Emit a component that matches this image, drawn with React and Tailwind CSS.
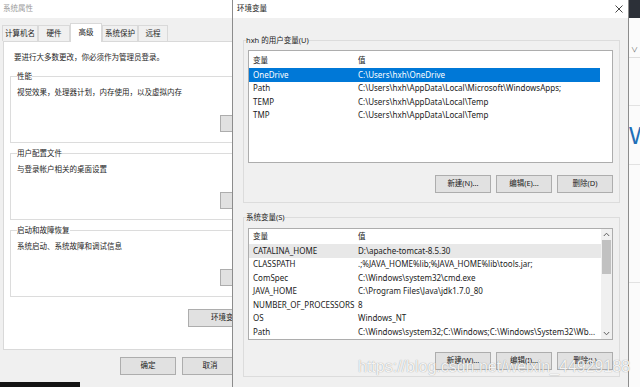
const userVars = [
  ["OneDrive", "C:\\Users\\hxh\\OneDrive"],
  ["Path", "C:\\Users\\hxh\\AppData\\Local\\Microsoft\\WindowsApps;"],
  ["TEMP", "C:\\Users\\hxh\\AppData\\Local\\Temp"],
  ["TMP", "C:\\Users\\hxh\\AppData\\Local\\Temp"],
];

const sysVars = [
  ["CATALINA_HOME", "D:\\apache-tomcat-8.5.30"],
  ["CLASSPATH", ".;%JAVA_HOME%lib;%JAVA_HOME%lib\\tools.jar;"],
  ["ComSpec", "C:\\Windows\\system32\\cmd.exe"],
  ["JAVA_HOME", "C:\\Program Files\\Java\\jdk1.7.0_80"],
  ["NUMBER_OF_PROCESSORS", "8"],
  ["OS", "Windows_NT"],
  ["Path", "C:\\Windows\\system32;C:\\Windows;C:\\Windows\\System32\\Wb..."],
];

function Btn({ children, className = "" }) {
  return (
    <div
      className={`flex h-[18px] shrink-0 items-center justify-center border border-[#adadad] bg-[#e1e1e1] text-[7.5px] text-[#222] ${className}`}
    >
      {children}
    </div>
  );
}

function Group({ label, text }) {
  return (
    <fieldset className="h-[72px] w-[240px] shrink-0 border border-[#dcdcdc] pl-[6px]">
      <legend className="leading-[10px]">{label}</legend>
      <div className="mt-[6px] leading-[10px]">{text}</div>
      <div className="mt-[18px] ml-[203px] h-[17px] w-[40px] border border-[#adadad] bg-[#e1e1e1]" />
    </fieldset>
  );
}

function Tab({ label, active, className }) {
  return (
    <div
      className={`flex shrink-0 items-center justify-center border-x border-t border-[#d9d9d9] ${
        active ? "relative z-10 -mb-px h-[19px] bg-white" : "h-[16px] bg-[#f0f0f0]"
      } ${className}`}
    >
      {label}
    </div>
  );
}

function Chevron({ up }) {
  return (
    <svg width="7" height="5" viewBox="0 0 7 5" className="mx-auto">
      <path
        d={up ? "M0.8 4 L3.5 1.2 L6.2 4" : "M0.8 1 L3.5 3.8 L6.2 1"}
        fill="none"
        stroke="#606060"
        strokeWidth="1"
      />
    </svg>
  );
}

function LeftWindow() {
  return (
    <div className="flex h-full w-[232px] shrink-0 flex-col overflow-hidden bg-[#f0f0f0] text-[7.5px] text-[#1e1e1e]">
      <div className="flex h-[18px] shrink-0 items-center bg-white pl-[3px] text-[#9a9a9a]">系统属性</div>

      <div className="mt-[5px] flex h-[18px] shrink-0 items-end pl-[2px]">
        <Tab label="计算机名" className="w-[36px]" />
        <Tab label="硬件" className="w-[32px]" />
        <Tab label="高级" active className="w-[32px]" />
        <Tab label="系统保护" className="w-[36px]" />
        <Tab label="远程" className="w-[30px]" />
      </div>

      <div className="ml-[3px] flex h-[309px] w-[270px] shrink-0 flex-col border border-[#d9d9d9] bg-white pt-[10px] pl-[6px]">
        <div className="ml-[4px] leading-[10px]">要进行大多数更改，你必须作为管理员登录。</div>
        <div className="mt-[9px] flex flex-col gap-[5px]">
          <Group label="性能" text="视觉效果，处理器计划，内存使用，以及虚拟内存" />
          <Group label="用户配置文件" text="与登录帐户相关的桌面设置" />
          <Group label="启动和故障恢复" text="系统启动、系统故障和调试信息" />
        </div>
        <Btn className="mt-[12px] ml-[178px] w-[100px] !justify-start pl-[22px]">环境变量(N)...</Btn>
      </div>

      <div className="mt-[7px] flex shrink-0 gap-[6px] pl-[120px]">
        <Btn className="h-[17px] w-[56px]">确定</Btn>
        <Btn className="h-[17px] w-[56px]">取消</Btn>
      </div>
      <div className="mt-[7px] h-[6px] w-[80px] shrink-0 bg-[#141414]" />
    </div>
  );
}

function Row({ name, value, className = "" }) {
  return (
    <div className={`flex h-[13.5px] items-center whitespace-nowrap ${className}`}>
      <div className="w-[109px] shrink-0 pl-[4px]">{name}</div>
      <div>{value}</div>
    </div>
  );
}

function Header({ className = "" }) {
  return (
    <div className={`flex items-center text-[7.5px] ${className}`}>
      <div className="w-[109px] shrink-0 pl-[4px]">变量</div>
      <div>值</div>
    </div>
  );
}

function RightWindow() {
  return (
    <div className="flex h-full w-[397px] shrink-0 flex-col border-x border-[#8c8c8c] bg-[#f0f0f0] text-[7.5px] text-[#1b1b1b]">
      <div className="flex h-[18px] shrink-0 items-center justify-between bg-white pl-[4px] pr-[5px]">
        <span>环境变量</span>
        <svg width="8" height="8" viewBox="0 0 8 8">
          <path d="M0.5 0.5 L7.5 7.5 M7.5 0.5 L0.5 7.5" stroke="#333" strokeWidth="0.9" />
        </svg>
      </div>

      <fieldset className="mt-[17px] ml-[10px] h-[168px] w-[377px] shrink-0 border border-[#dcdcdc] pl-[4px]">
        <legend className="-ml-[2px] text-[7.5px] leading-[10px]">hxh 的用户变量(U)</legend>
        <div className="mt-[5px] h-[113px] w-[365px] overflow-hidden border border-[#adadad] bg-white pt-[2px] text-[8px]">
          <Header className="h-[15px]" />
          {userVars.map(([n, v], i) => (
            <Row
              key={n + i}
              name={n}
              value={v}
              className={i === 0 ? "w-[351px] bg-[#0078d7] text-white" : "w-[351px]"}
            />
          ))}
        </div>
        <div className="mt-[12px] flex w-[365px] justify-end gap-[5px]">
          <Btn className="w-[56px]">新建(N)...</Btn>
          <Btn className="w-[56px]">编辑(E)...</Btn>
          <Btn className="w-[56px]">删除(D)</Btn>
        </div>
      </fieldset>

      <fieldset className="mt-[9px] ml-[10px] h-[165px] w-[377px] shrink-0 border border-[#dcdcdc] pl-[4px]">
        <legend className="-ml-[2px] text-[7.5px] leading-[10px]">系统变量(S)</legend>
        <div className="mt-[6px] flex h-[112px] w-[365px] overflow-hidden border border-[#adadad] bg-white text-[8px]">
          <div className="flex-1 pt-[1px]">
            <Header className="h-[14px]" />
            {sysVars.map(([n, v], i) => (
              <Row key={n + i} name={n} value={v} className={i === 0 ? "bg-[#e8e8e8]" : ""} />
            ))}
          </div>
          <div className="flex w-[11px] shrink-0 flex-col bg-[#f0f0f0]">
            <div className="flex h-[11px] items-center">
              <Chevron up />
            </div>
            <div className="mx-[1px] h-[34px] bg-[#c1c1c1]" />
            <div className="flex-1" />
            <div className="flex h-[11px] items-center">
              <Chevron />
            </div>
          </div>
        </div>
        <div className="mt-[12px] flex w-[365px] justify-end gap-[5px]">
          <Btn className="w-[56px]">新建(W)...</Btn>
          <Btn className="w-[56px]">编辑(I)...</Btn>
          <Btn className="w-[56px]">删除(L)</Btn>
        </div>
      </fieldset>
    </div>
  );
}

function EdgeStrip() {
  return (
    <div className="flex h-full flex-1 flex-col overflow-hidden bg-[#fbfbfb]">
      <div className="h-[18px] shrink-0 bg-[#2c3038]" />
      <div className="mt-[28px] h-[12px] shrink-0 border-b border-[#dedede] pl-[2px] text-[7px] leading-[8px] text-[#666]">
        ∨
      </div>
      <div className="mt-[47px] shrink-0 border-b border-[#e2e2e2]" />
      <div className="mt-[18px] shrink-0 font-['Liberation_Sans',sans-serif] text-[24px] leading-[24px] text-[#1f6fb8]">
        W
      </div>
      <div className="mt-[16px] shrink-0 border-b border-[#e2e2e2]" />
      <div className="mt-[117px] shrink-0 border-b border-[#e2e2e2]" />
    </div>
  );
}

export default function App() {
  return (
    <div className="relative flex h-[387px] w-[640px] overflow-hidden bg-[#f0f0f0] font-['Noto_Sans','Noto_Sans_CJK_SC',sans-serif]">
      <LeftWindow />
      <RightWindow />
      <EdgeStrip />
      <div className="pointer-events-none absolute left-[358px] top-[359px] whitespace-nowrap font-['Liberation_Sans',sans-serif] text-[16px] leading-[16px] text-white/90 [text-shadow:0_0_1px_rgba(0,0,0,0.45)]">
        https://blog.csdn.net/weixin_44929188
      </div>
    </div>
  );
}
